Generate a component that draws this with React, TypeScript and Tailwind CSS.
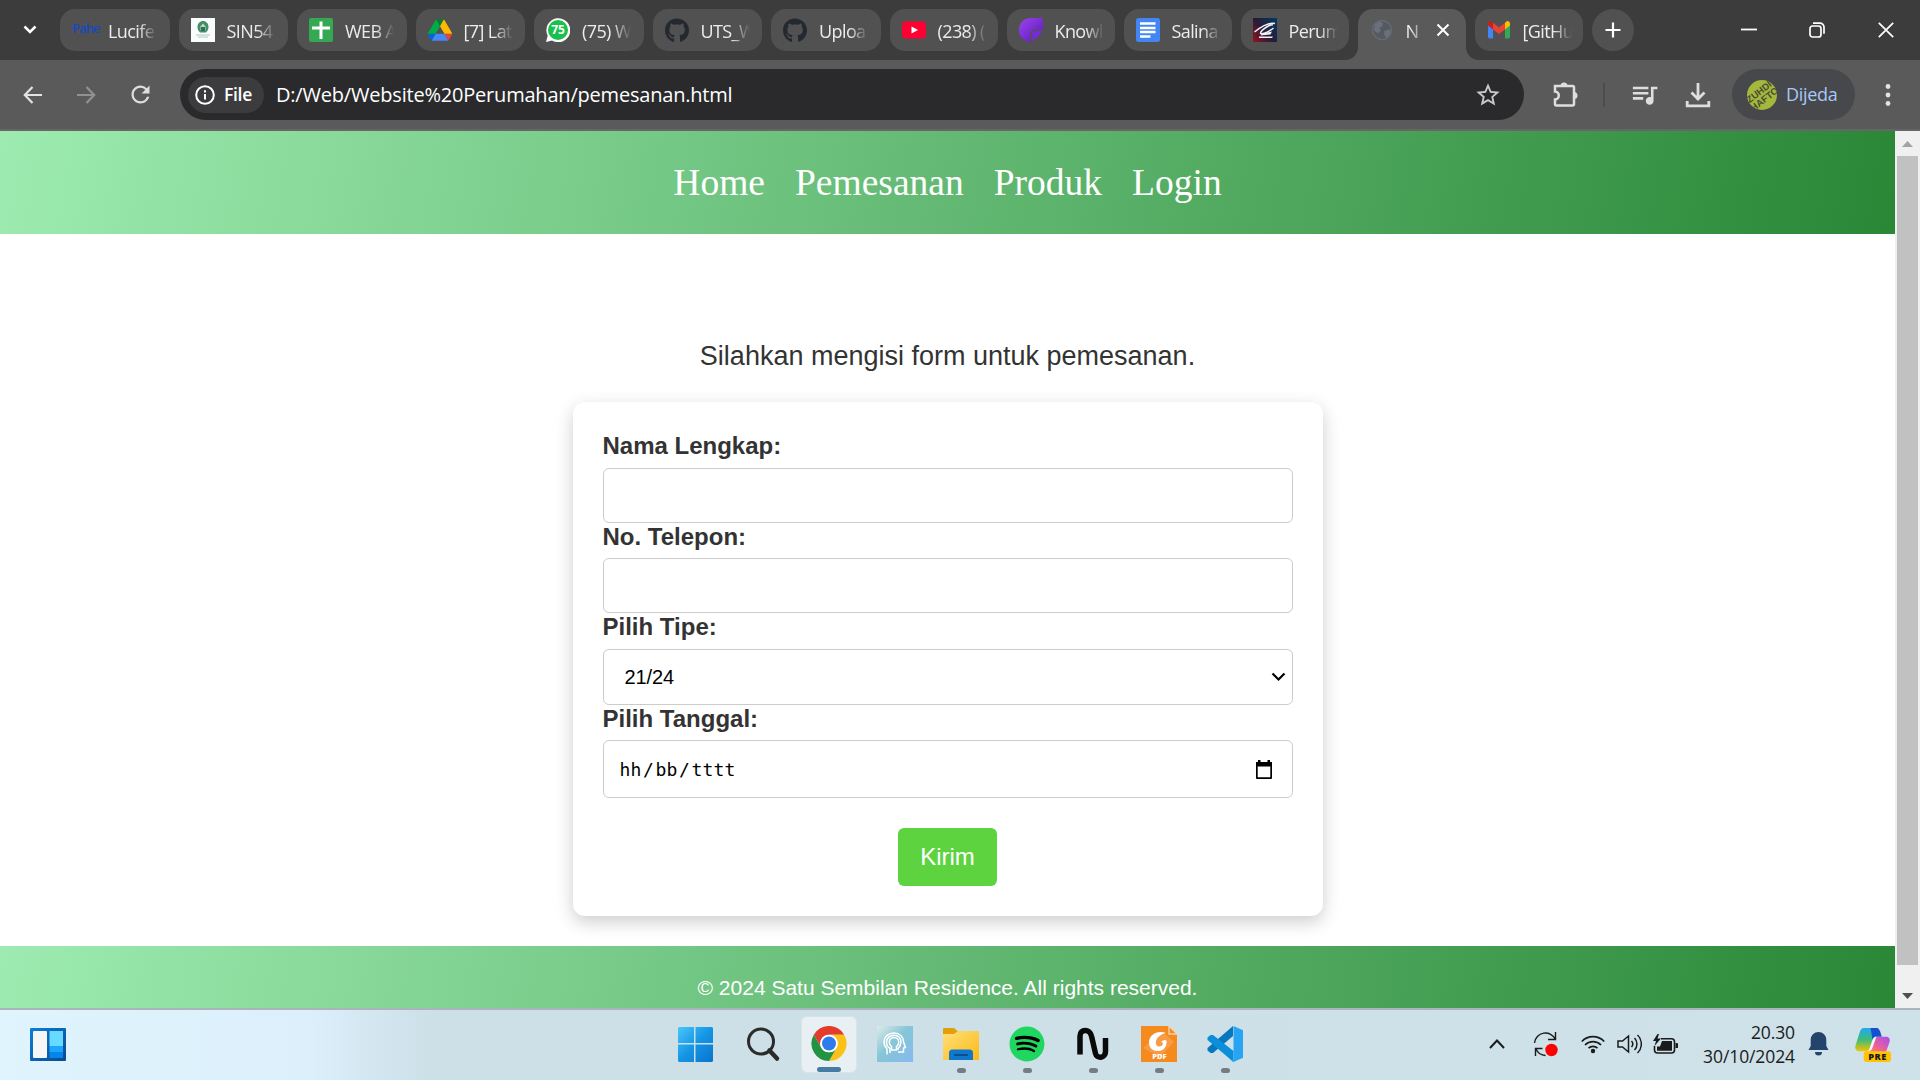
import React from "react";
import { FaGithub, FaSpotify } from "react-icons/fa";
import { MdQueueMusic, MdStarOutline, MdRefresh } from "react-icons/md";

const PaheIcon = () => (
  <span className="-mt-1 w-6 text-[13px] leading-6 font-semibold tracking-[-0.9px] text-[#1549c4] [font-family:'Open_Sans',sans-serif]">Pahe</span>
);

const SinIcon = () => (
  <svg width="24" height="24" viewBox="0 0 24 24">
    <rect width="24" height="24" fill="#fbfdfc" />
    <path d="M12 3c3 0 5.500 2.500 5.500 6 0 2.500-1 4-2.500 5.500H9C7.500 13 6.500 11.500 6.500 9c0-3.500 2.500-6 5.500-6z" fill="#3f8f6d" />
    <path d="M12 5.500l2.500 3v4h-5v-4z" fill="#cfd9a8" />
    <path d="M10 9h4v4h-4z" fill="#2f6f62" />
    <path d="M5 17h14M7 19h10" stroke="#a9cbbd" strokeWidth="1.200" />
  </svg>
);

const SheetIcon = () => (
  <svg width="24" height="24" viewBox="0 0 24 24">
    <rect width="24" height="24" rx="2" fill="#34a853" />
    <path d="M12 3.500V21M3 10h18" stroke="#fff" strokeWidth="3" />
  </svg>
);

const DriveIcon = () => (
  <svg width="24" height="22" viewBox="0 0 87.300 78">
    <path d="m6.600 66.850 3.850 6.650c.8 1.400 1.950 2.500 3.300 3.300l13.750-23.800h-27.500c0 1.550.4 3.100 1.200 4.500z" fill="#0066da" />
    <path d="m43.650 25-13.750-23.800c-1.350.8-2.500 1.900-3.300 3.300l-25.400 44a9.060 9.060 0 0 0-1.200 4.500h27.500z" fill="#00ac47" />
    <path d="m73.550 76.800c1.350-.8 2.500-1.900 3.300-3.300l1.600-2.750 7.650-13.250c.8-1.400 1.200-2.950 1.200-4.500h-27.500l5.850 11.500z" fill="#ea4335" />
    <path d="m43.650 25 13.750-23.800c-1.350-.8-2.900-1.200-4.500-1.200h-18.500c-1.600 0-3.150.45-4.500 1.200z" fill="#00832d" />
    <path d="m59.800 53h-32.300l-13.750 23.800c1.350.8 2.900 1.200 4.500 1.200h50.800c1.600 0 3.150-.45 4.500-1.200z" fill="#4688f4" />
    <path d="m73.400 26.500-12.700-22c-.8-1.400-1.950-2.500-3.300-3.300l-13.750 23.800 16.150 28h27.450c0-1.550-.4-3.100-1.200-4.500z" fill="#ffba00" />
  </svg>
);

const WhatsappIcon = () => (
  <svg width="24" height="24" viewBox="0 0 24 24">
    <path d="M0 24l1.700-6.200A12 12 0 1 1 6 22.400z" fill="#fff" />
    <circle cx="12" cy="12" r="10" fill="#19c04b" />
    <text x="12" y="16.200" textAnchor="middle" fontSize="12" fontWeight="700" fill="#fff" fontFamily="Open Sans">75</text>
  </svg>
);

const GithubIcon = () => <FaGithub size={25} color="#24292f" />;

const YoutubeIcon = () => (
  <svg width="24" height="24" viewBox="0 0 24 24">
    <rect y="3.500" width="24" height="17" rx="4" fill="#ff0033" />
    <path d="M9.500 8.500v7l6.500-3.500z" fill="#fff" />
  </svg>
);

const KnowIcon = () => (
  <svg width="24" height="24" viewBox="0 0 24 24">
    <defs>
      <linearGradient id="know" x1="0" y1="0" x2="1" y2="1">
        <stop offset="0" stopColor="#9a45f0" />
        <stop offset="1" stopColor="#5b17b5" />
      </linearGradient>
    </defs>
    <path d="M12 0h12v11.500h-8.500a4 4 0 0 0-4 4V24A12 12 0 0 1 12 0z" fill="url(#know)" />
    <path d="M15 13h9L13.500 23.500v-9A1.500 1.500 0 0 1 15 13z" fill="#7a28dd" />
  </svg>
);

const DocsIcon = () => (
  <svg width="24" height="24" viewBox="0 0 24 24">
    <rect width="24" height="24" rx="2.500" fill="#4285f4" />
    <path d="M4 5.500h15.500M4 10h15.500M4 14h15.500M4 18.500h10.500" stroke="#fff" strokeWidth="2.300" />
  </svg>
);

const PerumIcon = () => (
  <svg width="24" height="24" viewBox="0 0 24 24">
    <defs>
      <linearGradient id="perum" x1="0" y1="0.900" x2="1" y2="0.100">
        <stop offset="0" stopColor="#8c1420" />
        <stop offset="0.450" stopColor="#2a1a38" />
        <stop offset="1" stopColor="#04365e" />
      </linearGradient>
    </defs>
    <rect width="24" height="24" fill="url(#perum)" />
    <path d="M1.500 14C7 9.500 16 4 22 5.500M20 7c-3-1-12 5-12.500 8 0 2.500 8-1 13-5" fill="none" stroke="#eef1f5" strokeWidth="1.500" />
    <path d="M9 15.500l10-2-1.500 3-10 1zM6 18.500h14l-1 1.500H6z" fill="#eef1f5" />
  </svg>
);

const GlobeIcon = () => (
  <svg width="22" height="24" viewBox="0 0 22 24">
    <circle cx="11" cy="12" r="9.500" fill="#555a61" stroke="#646a73" strokeWidth="1.500" />
    <path d="M4 6l5-2.500 3 2-1 3-3 1.500 2 2.500-3 3-4-3zM13 13l5-1.500 2 1-2 5.500-3 2-1.500-3z" fill="#6a717c" />
  </svg>
);

const GmailIcon = () => (
  <svg width="24" height="24" viewBox="0 0 24 24">
    <path d="M1 6.500v12.300c0 .9.700 1.700 1.700 1.700H6V11z" fill="#4285f4" />
    <path d="M18 20.500h3.300c1 0 1.700-.8 1.700-1.700V6.500L18 11z" fill="#34a853" />
    <path d="M18 5v6.500l5-4V5.600c0-2.200-2.300-3.200-4-1.900z" fill="#fbbc04" />
    <path d="M6 11.500V4.800l6 4.700 6-4.700v6.700L12 16z" fill="#ea4335" />
    <path d="M1 5.600v1.900l5 4V4.800L5 3.700C3.300 2.400 1 3.400 1 5.600z" fill="#c5221f" />
  </svg>
);

const tabs = [
  { title: "Lucife", icon: <PaheIcon /> },
  { title: "SIN54", icon: <SinIcon /> },
  { title: "WEB A", icon: <SheetIcon /> },
  { title: "[7] Lat", icon: <DriveIcon /> },
  { title: "(75) W", icon: <WhatsappIcon /> },
  { title: "UTS_W", icon: <GithubIcon /> },
  { title: "Uploa", icon: <GithubIcon /> },
  { title: "(238) (", icon: <YoutubeIcon />, narrow: true },
  { title: "Knowl", icon: <KnowIcon />, narrow: true },
  { title: "Salina", icon: <DocsIcon />, narrow: true },
  { title: "Perum", icon: <PerumIcon />, narrow: true },
  { title: "N", icon: <GlobeIcon />, active: true },
  { title: "[GitHu", icon: <GmailIcon />, narrow: true },
];

function Tab({ title, icon, active, narrow }: { title: string; icon: React.ReactNode; active?: boolean; narrow?: boolean }) {
  const label = "ml-3 whitespace-nowrap text-[18px] leading-6 tracking-[-0.6px] text-[#ececec] pt-[2px]";
  if (active) {
    return (
      <div className="relative -mb-[9px] flex h-[51px] w-[108px] shrink-0 items-center rounded-t-[15px] bg-[#5a5a5a] pb-[9px] pl-3">
        <svg className="absolute bottom-0 -left-[13px]" width="13" height="13"><path d="M13 0v13H0A13 13 0 0 0 13 0z" fill="#5a5a5a" /></svg>
        <svg className="absolute -right-[13px] bottom-0" width="13" height="13"><path d="M0 0v13h13A13 13 0 0 1 0 0z" fill="#5a5a5a" /></svg>
        <span className="flex w-6 shrink-0 justify-center">{icon}</span>
        <span className={`${label} w-[14px] [mask-image:linear-gradient(to_right,#000_30%,#0006)]`}>{title}</span>
        <svg className="ml-4" width="14" height="14" viewBox="0 0 14 14"><path d="M1.500 1.500l11 11M12.500 1.500l-11 11" stroke="#fff" strokeWidth="2" /></svg>
      </div>
    );
  }
  return (
    <div className={`flex h-[42px] shrink-0 items-center rounded-[15px] bg-[#515151] pl-3 ${narrow ? "w-[108px]" : "w-[109.5px]"}`}>
      <span className="flex w-6 shrink-0 justify-center">{icon}</span>
      <span className={`${label} w-[49px] [mask-image:linear-gradient(to_right,#000_62%,transparent)]`}>{title}</span>
    </div>
  );
}

function TabStrip() {
  return (
    <div className="flex h-[60px] items-start bg-[#3c3c3c] pt-[9px]">
      <div className="flex h-[42px] w-[60px] items-center justify-center">
        <svg width="14" height="10" viewBox="0 0 14 10"><path d="M1.500 1.500L7 7l5.500-5.500" fill="none" stroke="#fff" strokeWidth="2.500" /></svg>
      </div>
      <div className="flex gap-[9px]">
        {tabs.map((t, i) => <Tab key={i} {...t} />)}
        <div className="flex h-[42px] w-[42px] items-center justify-center rounded-full bg-[#515151]">
          <svg width="16" height="16" viewBox="0 0 16 16"><path d="M8 .5v15M.5 8h15" stroke="#fff" strokeWidth="2.200" /></svg>
        </div>
      </div>
      <div className="ml-auto flex h-[42px] items-center pr-[26px]">
        <svg width="16" height="16"><path d="M0 7.500h16" stroke="#fff" strokeWidth="1.800" /></svg>
        <svg className="ml-[52px]" width="16" height="16" viewBox="0 0 16 16" fill="none" stroke="#fff" strokeWidth="1.700">
          <rect x="1" y="4" width="11" height="11" rx="2.500" />
          <path d="M4 1.200h7a4 4 0 0 1 4 4v6.500" />
        </svg>
        <svg className="ml-[53px]" width="16" height="16"><path d="M.8.8l14.400 14.400M15.200.8L.8 15.200" stroke="#fff" strokeWidth="1.700" /></svg>
      </div>
    </div>
  );
}

function Toolbar() {
  return (
    <div className="flex h-[71px] items-center border-b-2 border-[#676565] bg-[#5a5a5a]">
      <svg className="ml-[23px]" width="19" height="18" viewBox="0 0 19 18" fill="none" stroke="#e3e3e3" strokeWidth="2.200"><path d="M9.500 1L1.800 9l7.700 8M2 9h17" /></svg>
      <svg className="ml-[35px]" width="19" height="18" viewBox="0 0 19 18" fill="none" stroke="#919191" strokeWidth="2.200"><path d="M9.500 1l7.700 8-7.700 8M17 9H0" /></svg>
      <MdRefresh className="ml-[31px]" size={27} color="#dedede" />
      <div className="ml-[26px] flex h-[51px] w-[1344px] items-center rounded-full bg-[#2a2a2c] pl-2">
        <div className="flex h-9 w-[76px] items-center rounded-full bg-[#3c3c3e] pl-[7px]">
          <svg width="20" height="20" viewBox="0 0 20 20" fill="none" stroke="#fff" strokeWidth="2"><circle cx="10" cy="10" r="8.800" /><path d="M10 9v5.500M10 5.300v2.200" /></svg>
          <span className="ml-[9px] text-[17.5px] font-semibold tracking-[-0.3px] text-white">File</span>
        </div>
        <span className="ml-[12px] text-[20px] tracking-[-0.2px] whitespace-nowrap text-white">D:/Web/Website%20Perumahan/pemesanan.html</span>
        <MdStarOutline className="mr-[22px] ml-auto" size={28} color="#c9c9c9" />
      </div>
      <svg className="ml-[29px]" width="26" height="26" viewBox="0 0 26 26">
        <path d="M2 4h17.500a1.500 1.500 0 0 1 1.500 1.500V22a1.500 1.500 0 0 1-1.500 1.500h-16A1.500 1.500 0 0 1 2 22v-4.500c5 0 5-8 0-8z" fill="none" stroke="#dedede" strokeWidth="2.500" />
        <path d="M7.500 4a3.500 3.500 0 0 1 7 0zM21 10a3.500 3.500 0 0 1 0 7z" fill="#dedede" />
      </svg>
      <span className="ml-[24px] h-6 w-[2px] bg-[#4c4c4c]" />
      <MdQueueMusic className="ml-[24px]" size={31} color="#dedede" />
      <svg className="ml-[25px]" width="26" height="26" viewBox="0 0 26 26" fill="none" stroke="#dedede" strokeWidth="2.800"><path d="M13 1v15M6.500 10.500l6.500 6.500 6.500-6.500M2.200 19v4.800h21.600V19" /></svg>
      <div className="ml-[21px] flex h-[51px] w-[123px] items-center rounded-full bg-[#47484c] pl-[15px]">
        <svg width="30" height="30" viewBox="0 0 30 30">
          <defs><clipPath id="avatar"><circle cx="15" cy="15" r="15" /></clipPath></defs>
          <g clipPath="url(#avatar)">
            <rect width="30" height="30" fill="#a3b83c" />
            <g transform="rotate(-38 15 15)" fontFamily="Liberation Sans" fontWeight="700" fontSize="9.500" fill="#4b4a35">
              <text x="0" y="14">ZUHDI</text>
              <text x="-2" y="23">HAFTO</text>
            </g>
          </g>
        </svg>
        <span className="ml-[9px] text-[18px] tracking-[-0.3px] text-[#a8c7fa]">Dijeda</span>
      </div>
      <svg className="ml-[29px]" width="8" height="24"><g fill="#e3e3e3"><circle cx="4" cy="3.500" r="2.400" /><circle cx="4" cy="12" r="2.400" /><circle cx="4" cy="20.500" r="2.400" /></g></svg>
    </div>
  );
}

const fieldBox = "rounded-[6px] border border-[#ccc] w-full";
const labelText = "text-[24px] leading-[27px] font-bold text-[#333]";

function Page() {
  return (
    <div className="flex h-[877px] overflow-hidden">
      <div className="h-[877px] w-[1895px] overflow-hidden bg-white [font-family:'Liberation_Sans',Arial,sans-serif]">
        <nav className="flex h-[103px] justify-center gap-[30px] bg-[linear-gradient(100deg,#9debb0,#298736)] pt-[30px] text-[37.5px] leading-[43px] text-white [font-family:'Liberation_Serif',serif]">
          <span>Home</span>
          <span>Pemesanan</span>
          <span>Produk</span>
          <span>Login</span>
        </nav>
        <p className="mt-[106px] text-center text-[27px] leading-[32px] text-[#333]">Silahkan mengisi form untuk pemesanan.</p>
        <form className="mx-auto mt-[30px] flex h-[514px] w-[750px] flex-col rounded-[12px] bg-white px-[30px] pt-[30px] shadow-[0_6px_18px_rgba(0,0,0,0.2)]">
          <label className={labelText}>Nama Lengkap:</label>
          <div className={`${fieldBox} mt-[9px] h-[55px]`} />
          <label className={labelText}>No. Telepon:</label>
          <div className={`${fieldBox} mt-[8px] h-[55px]`} />
          <label className={labelText}>Pilih Tipe:</label>
          <div className={`${fieldBox} mt-[9px] flex h-[56px] items-center justify-between pr-[6px] pl-[21px] text-[20px] text-black`}>
            <span className="tracking-[-0.1px]">21/24</span>
            <svg width="15" height="10" viewBox="0 0 15 10"><path d="M1.500 1.500l6 6 6-6" fill="none" stroke="#000" strokeWidth="2.200" /></svg>
          </div>
          <label className={labelText}>Pilih Tanggal:</label>
          <div className={`${fieldBox} mt-[8px] flex h-[58px] items-center pr-[20px] pl-[16px] text-[18px] tracking-[0.15px] text-black [font-family:'DejaVu_Sans_Mono',monospace]`}>
            <span>hh</span>
            <span className="mx-[1.500px]">/</span>
            <span>bb</span>
            <span className="mx-[1.500px]">/</span>
            <span>tttt</span>
            <svg className="ml-auto" width="16" height="19" viewBox="0 0 16 19"><path d="M0 2h2V0h2.500v2h7V0H14v2h2v16a1 1 0 0 1-1 1H1a1 1 0 0 1-1-1zM1.700 6.500v10.800h12.600V6.500z" fill="#000" fillRule="evenodd" /></svg>
          </div>
          <button className="mt-[30px] h-[58px] w-[99px] self-center rounded-[6px] bg-[#5cd33f] text-[24px] text-white">Kirim</button>
        </form>
        <footer className="mt-[30px] h-[84px] bg-[linear-gradient(100deg,#9debb0,#298736)] pt-[30px] text-center text-[21px] leading-[24px] text-white">
          © 2024 Satu Sembilan Residence. All rights reserved.
        </footer>
      </div>
      <div className="flex w-[25px] flex-col items-center bg-[#f0f0f0]">
        <div className="flex h-[25px] items-center"><svg width="11" height="6"><path d="M0 6L5.500 0 11 6z" fill="#a3a3a3" /></svg></div>
        <div className="h-[809px] w-[21px] bg-[#c1c1c1]" />
        <div className="flex flex-1 items-start pt-[28px]"><svg width="11" height="6"><path d="M0 0l5.500 6L11 0z" fill="#505050" /></svg></div>
      </div>
    </div>
  );
}

const WindowsIcon = () => (
  <svg width="36" height="36" viewBox="0 0 36 36">
    <defs><linearGradient id="win" x1="0" y1="0" x2="36" y2="36" gradientUnits="userSpaceOnUse"><stop offset="0" stopColor="#4cc9fb" /><stop offset="0.500" stopColor="#1597e5" /><stop offset="1" stopColor="#0a73cf" /></linearGradient></defs>
    <path d="M2 1h15v16H1V2zM18.500 1H35l1 1v15H18.500zM1 18.500h16V36H2l-1-1zM18.500 18.500H36V35l-1 1H18.500z" fill="url(#win)" />
  </svg>
);

const SearchIcon = () => (
  <svg width="36" height="36" viewBox="0 0 36 36" fill="none" stroke="#2b2b2b">
    <circle cx="16" cy="15.500" r="12.500" strokeWidth="3" />
    <path d="M24.500 24.500l7.500 8" strokeWidth="4.500" strokeLinecap="round" />
  </svg>
);

const ChromeIcon = () => (
  <svg width="36" height="36" viewBox="0 0 36 36">
    <path d="M2.400 9A18 18 0 0 1 33.600 9H18a9 9 0 0 0-7.800 13.500z" fill="#e33b2e" />
    <path d="M33.600 9A18 18 0 0 1 18 36l7.800-13.500A9 9 0 0 0 18 9z" fill="#fbc116" />
    <path d="M18 36A18 18 0 0 1 2.400 9l7.800 13.500A9 9 0 0 0 25.800 22.500z" fill="#229342" />
    <circle cx="18" cy="18" r="9" fill="#fff" />
    <circle cx="18" cy="18" r="7.200" fill="#2f7bed" />
  </svg>
);

const HeadIcon = () => (
  <svg width="36" height="36" viewBox="0 0 36 36" fill="none" stroke="#fff" strokeWidth="1.500">
    <defs><linearGradient id="head" x1="0" y1="0" x2="1" y2="1"><stop offset="0" stopColor="#dcebe9" /><stop offset="0.450" stopColor="#86c6d6" /><stop offset="1" stopColor="#86b8f0" /></linearGradient></defs>
    <rect width="36" height="36" fill="url(#head)" stroke="none" />
    <path d="M10 28.500V23c-2-2-3-4.500-3-7C7 11 11 7 17 7c5.500 0 9.500 3.500 9.500 9l2 5.500-2 .5V26H21" />
    <path d="M13 27v-4.500C10.500 21 9.500 18.500 9.500 16c0-4 3.500-6.700 7.500-6.700s7 2.700 7 6.700c0 3-1.500 5-3 6.500V24" />
    <path d="M14.500 24v-3.500c-1.500-1-2.200-2.500-2.200-4.300a4.700 4.700 0 0 1 9.400 0c0 1.800-.7 3.300-2.200 4.300V24z" />
  </svg>
);

const FolderIcon = () => (
  <svg width="36" height="36" viewBox="0 0 36 36">
    <defs><linearGradient id="folder" x1="0" y1="0" x2="1" y2="1"><stop offset="0" stopColor="#ffe07a" /><stop offset="1" stopColor="#fbb916" /></linearGradient></defs>
    <path d="M0 3a1 1 0 0 1 1-1h10l4 3.500V9H0z" fill="#e0a00b" />
    <path d="M0 8h11l4-3h20a1 1 0 0 1 1 1v28H0z" fill="url(#folder)" />
    <path d="M6 34v-7a3.500 3.500 0 0 1 3.500-3.500h17A3.500 3.500 0 0 1 30 27v7z" fill="#0f78cb" />
    <path d="M11 29h14" stroke="#0a4f94" strokeWidth="2" />
  </svg>
);

const SpotifyIcon = () => (
  <span className="flex size-9 items-center justify-center rounded-full bg-[radial-gradient(circle,#000_55%,transparent_60%)]"><FaSpotify size={36} color="#1fd760" /></span>
);

const NIcon = () => (
  <svg width="36" height="36" viewBox="0 0 36 36"><path d="M5 28.500V10c0-7.500 10-7.500 11.500 0l4 17.500c1.200 5.500 10 5 10-2V12" fill="none" stroke="#0a0a0a" strokeWidth="5.500" /></svg>
);

const PdfIcon = () => (
  <svg width="36" height="36" viewBox="0 0 36 36">
    <path d="M0 0h27l9 9v27H0z" fill="#f58a1f" />
    <path d="M21 5l12 11-14 15L2 22z" fill="#f79b45" />
    <path d="M28 0l8 8h-8z" fill="#f58a1f" stroke="#f6d3ad" strokeWidth="1.300" />
    <path d="M25 7C16 4 8 9 8 16.500c0 5 3.500 8.500 9 8.500 6 0 9-4.500 8.500-10.500-2-1.500-4 0-5.500 1.500 3-.5 2.500 4.500-1.500 4.500-6 0-5-11 6.500-13.500z" fill="#fff" />
    <text x="18.500" y="33" textAnchor="middle" fontSize="7.500" fontWeight="800" fill="#fff" fontFamily="Open Sans">PDF</text>
  </svg>
);

const VscodeIcon = () => (
  <svg width="36" height="36" viewBox="0 0 36 36">
    <path d="M26 0v10L6 27 3.500 27 .5 24.500v-2.500z" fill="#0878be" />
    <path d="M.5 11.500l3-2.500H6l20.500 16V36L.5 14z" fill="#0b8fdb" />
    <path d="M26.500 0L36 4.300v27.400L26.500 36 24 34.500l2.500-.5z" fill="#27a5f2" />
  </svg>
);

const taskbarApps = [
  { icon: <WindowsIcon />, state: "none" },
  { icon: <SearchIcon />, state: "none" },
  { icon: <ChromeIcon />, state: "active" },
  { icon: <HeadIcon />, state: "none" },
  { icon: <FolderIcon />, state: "open" },
  { icon: <SpotifyIcon />, state: "open" },
  { icon: <NIcon />, state: "open" },
  { icon: <PdfIcon />, state: "open" },
  { icon: <VscodeIcon />, state: "open" },
];

function Taskbar() {
  return (
    <div className="flex h-[72px] border-t-2 border-[#a9b4bb] bg-[linear-gradient(to_right,#dff4fc_0px,#dceffb_310px,#cddfe7_430px,#cddfe7_1100px,#cfe1e9_1920px)]">
      <div className="flex h-[68px] w-[662px] items-center pl-[30px]">
        <svg width="36" height="36" viewBox="0 0 36 36">
          <defs><linearGradient id="widget" x1="0" y1="0" x2="1" y2="1"><stop offset="0" stopColor="#0a7fdc" /><stop offset="1" stopColor="#0c4a8c" /></linearGradient></defs>
          <rect y="2" width="36" height="33" rx="1" fill="url(#widget)" />
          <rect x="3" y="5" width="14" height="27" rx="1" fill="#f6f6f6" />
          <rect x="19.500" y="5" width="13.500" height="15" fill="#68d9ff" />
          <rect x="19.500" y="20" width="13.500" height="6" fill="#1ca5fd" />
          <rect x="19.500" y="26" width="13.500" height="6" fill="#0585ea" />
        </svg>
      </div>
      <div className="flex pt-[6px]">
        {taskbarApps.map((a, i) => (
          <div key={i} className={i === 0 ? "mr-[2px] flex w-[66px] justify-center" : "flex w-[66px] justify-center"}>
            <div className={a.state === "active" ? "flex h-[57px] w-[56px] flex-col items-center rounded-[6px] border border-[#d9e4e9] bg-[#e8f0f4] pt-[9px]" : "flex h-[57px] w-[56px] flex-col items-center pt-[10px]"}>
              {a.icon}
              {a.state === "active" && <span className="mt-[6px] h-[5px] w-6 shrink-0 rounded-full bg-[#467ba3]" />}
              {a.state === "open" && <span className="mt-[6px] h-[5px] w-[9px] shrink-0 rounded-full bg-[#757d82]" />}
            </div>
          </div>
        ))}
      </div>
      <div className="ml-auto flex h-[68px] items-center pr-[29px] text-[#1b1b1b]">
        <svg width="16" height="10" viewBox="0 0 16 10"><path d="M1 9l7-7.500L15 9" fill="none" stroke="#1b1b1b" strokeWidth="2" /></svg>
        <svg className="ml-[28px]" width="26" height="26" viewBox="0 0 26 26" fill="none" stroke="#1b1b1b" strokeWidth="1.400">
          <path d="M1.500 12a11 11 0 0 1 21-3.500M22.500 1v7.500H15M9.500 17.500H2.500V25M3 18a11 11 0 0 0 9.500 6.500" />
          <circle cx="18.500" cy="19" r="6.200" fill="#ff0000" stroke="none" />
        </svg>
        <svg className="ml-[22px]" width="24" height="20" viewBox="0 0 24 20" fill="none" stroke="#1b1b1b" strokeWidth="1.700">
          <path d="M.8 7.500a15.500 15.500 0 0 1 22.400 0M4 11a11.300 11.300 0 0 1 16 0M7.500 14.200a6.500 6.500 0 0 1 9 0" />
          <circle cx="12" cy="17" r="2.200" fill="#1b1b1b" stroke="none" />
        </svg>
        <svg className="ml-3" width="25" height="22" viewBox="0 0 25 22" fill="none" stroke="#1b1b1b" strokeWidth="1.500">
          <path d="M1 8v6h4.500l6 5V3l-6 5zM14.500 8a4.500 4.500 0 0 1 0 6M17.500 5a8.500 8.500 0 0 1 0 12M20.500 2a12.500 12.500 0 0 1 0 18" />
        </svg>
        <svg className="ml-[11px]" width="25" height="21" viewBox="0 0 25 21">
          <path d="M8 4.800h10.500a3 3 0 0 1 3 3V16a3 3 0 0 1-3 3H4.500a3 3 0 0 1-3-3v-4" fill="none" stroke="#1b1b1b" strokeWidth="1.600" />
          <path d="M9 7h10v9.700H4V12.500h3z" fill="#1b1b1b" />
          <path d="M22.500 9h1.500a1 1 0 0 1 1 1v4h-2.500zM4.500 0L0 7h3l-1.500 5L8 4.500H4.500L6 0z" fill="#1b1b1b" />
        </svg>
        <div className="ml-[23px] flex w-[94px] flex-col items-end text-[17.5px] leading-6 tracking-[-0.1px] whitespace-nowrap">
          <span>20.30</span>
          <span>30/10/2024</span>
        </div>
        <svg className="ml-[13px]" width="21" height="24" viewBox="0 0 21 24" fill="#24456b"><path d="M10.500 0A7.800 7.800 0 0 1 18.300 8v6l2.200 4H.5l2.200-4V8A7.800 7.800 0 0 1 10.500 0zM7 20h7a3.500 3.500 0 0 1-7 0z" /></svg>
        <svg className="ml-[26px]" width="36" height="35" viewBox="0 0 37 36">
          <defs>
            <linearGradient id="copa" x1="0" y1="0" x2="0" y2="1"><stop offset="0" stopColor="#22a8f0" /><stop offset="0.500" stopColor="#3dbb7c" /><stop offset="1" stopColor="#f5c400" /></linearGradient>
            <linearGradient id="copb" x1="1" y1="0" x2="0" y2="1"><stop offset="0" stopColor="#a64df0" /><stop offset="0.600" stopColor="#f2638f" /><stop offset="1" stopColor="#ff9a5a" /></linearGradient>
          </defs>
          <path d="M9 1h15l-7 18c-1.500 4-3 6-7 6H4c-3 0-4.500-3-3.500-6L5 5c.8-2.500 2-4 4-4z" fill="url(#copa)" />
          <path d="M16 1h6c2 0 3 1.200 4 4l1.500 5H22c-2 0-3 1-4 3z" fill="#1450d0" />
          <path d="M24 10h8c3 0 4.500 2.500 3.500 5.500L32.500 24c-1 2.500-2 3-4 3H10c3 0 4.500-1 6-5l3-8c1-3 2.500-4 5-4z" fill="url(#copb)" />
          <path d="M18 13c1-2.500 2.500-3 4-3l-4 11c-1 2.500-2 4-4 4z" fill="#f4f6fa" />
          <rect x="9" y="25" width="28" height="11" rx="2.500" fill="#ffc400" />
          <text x="23.200" y="34" textAnchor="middle" fontSize="9.500" fontWeight="800" fill="#1b1b1b" fontFamily="Open Sans" letterSpacing="0.500">PRE</text>
        </svg>
      </div>
    </div>
  );
}

export default function App() {
  return (
    <div className="flex h-[1080px] w-[1920px] flex-col overflow-hidden bg-white [font-family:'Open_Sans','Noto_Sans',sans-serif]">
      <TabStrip />
      <Toolbar />
      <Page />
      <Taskbar />
    </div>
  );
}
